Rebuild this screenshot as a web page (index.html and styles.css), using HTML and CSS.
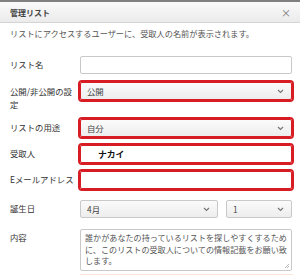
FILE: index.html
```html
<!DOCTYPE html>
<html lang="ja">
<head>
    <meta charset="UTF-8">
    <meta name="viewport" content="width=device-width, initial-scale=1.0">
    <title>管理リスト</title>
    <link rel="stylesheet" href="styles.css">
</head>
<body>
    <div class="dialog">
        <div class="dlg-head">
            <span class="dlg-title">管理リスト</span>
            <span class="dlg-close">×</span>
        </div>
        <p class="dlg-note">リストにアクセスするユーザーに、受取人の名前が表示されます。</p>

        <div class="list-form">
            <label class="f-label">リスト名</label>
            <div class="f-input"></div>

            <label class="f-label two-line">公開/非公開の設定</label>
            <div class="f-select marked">
                <span>公開</span>
                <svg class="chev" width="7" height="5" viewBox="0 0 7 5"><polyline points="1,1 3.5,3.5 6,1" fill="none" stroke="#777" stroke-width="1.2"/></svg>
            </div>

            <label class="f-label">リストの用途</label>
            <div class="f-select marked">
                <span>自分</span>
                <svg class="chev" width="7" height="5" viewBox="0 0 7 5"><polyline points="1,1 3.5,3.5 6,1" fill="none" stroke="#777" stroke-width="1.2"/></svg>
            </div>

            <label class="f-label">受取人</label>
            <div class="f-input marked"><span class="name">ナカイ</span></div>

            <label class="f-label">Eメールアドレス</label>
            <div class="f-input marked"></div>

            <label class="f-label spaced">誕生日</label>
            <div class="date-row spaced">
                <div class="f-select month">
                    <span>4月</span>
                    <svg class="chev" width="7" height="5" viewBox="0 0 7 5"><polyline points="1,1 3.5,3.5 6,1" fill="none" stroke="#777" stroke-width="1.2"/></svg>
                </div>
                <div class="f-select day">
                    <span>1</span>
                    <svg class="chev" width="7" height="5" viewBox="0 0 7 5"><polyline points="1,1 3.5,3.5 6,1" fill="none" stroke="#777" stroke-width="1.2"/></svg>
                </div>
            </div>

            <label class="f-label spaced">内容</label>
            <div class="f-area spaced">誰かがあなたの持っているリストを探しやすくするために、このリストの受取人についての情報記載をお願い致します。<svg class="grip" width="6" height="6" viewBox="0 0 6 6"><path d="M5 1 L1 5 M5 3 L3 5" stroke="#aaa" stroke-width="0.8"/></svg></div>
        </div>

        <div class="dlg-foot"></div>
    </div>
</body>
</html>
```

FILE: styles.css
```css
body {
    margin: 0;
    background: #fff;
    font-family: "Noto Sans CJK JP", "Noto Sans", sans-serif;
    color: #333;
}

.dialog {
    width: 300px;
    height: 275px;
    box-sizing: border-box;
    border-top: 2px solid #808080;
    overflow: hidden;
}

.dlg-head {
    height: 20px;
    display: flex;
    align-items: center;
    justify-content: space-between;
    padding: 0 9px 0 10px;
    background: linear-gradient(#fafafa, #ebebeb);
    border-bottom: 1px solid #d4d4d4;
    font-size: 8px;
}

.dlg-title {
    font-weight: bold;
    color: #444;
}

.dlg-close {
    color: #777;
    font-size: 10px;
}

.dlg-note {
    margin: 4px 10px 0;
    font-size: 8.2px;
    line-height: 12px;
    color: #555;
}

.list-form {
    display: grid;
    grid-template-columns: 70px 1fr;
    row-gap: 8px;
    padding: 17px 8px 0 10px;
    align-items: start;
}

.f-label {
    font-size: 8.4px;
    line-height: 13px;
    padding-top: 2px;
    color: #333;
}

.two-line {
    padding-top: 3px;
    padding-right: 8px;
}

.spaced {
    margin-top: 3px;
}

.f-input,
.f-select {
    height: 18px;
    box-sizing: border-box;
    border: 1px solid #c9c9c9;
    border-radius: 2px;
    background: #fff;
    font-size: 8.4px;
    display: flex;
    align-items: center;
    padding: 0 6px;
}

.f-select {
    justify-content: space-between;
    background: linear-gradient(#fbfbfb, #ededed);
    color: #444;
}

.marked {
    border-color: #d71c23;
    outline: 2px solid #d71c23;
}

.name {
    font-weight: bold;
    color: #111;
    font-size: 8.8px;
    padding-left: 11px;
}

.chev {
    margin-right: 1px;
}

.date-row {
    display: flex;
    gap: 8px;
}

.month {
    width: 138px;
}

.day {
    flex: 1;
}

.f-area {
    height: 42px;
    box-sizing: border-box;
    border: 1px solid #c9c9c9;
    border-radius: 2px;
    padding: 2px 2px 0 4px;
    font-size: 8.1px;
    line-height: 11.5px;
    color: #555;
    overflow: hidden;
    position: relative;
}

.grip {
    position: absolute;
    right: 1px;
    bottom: 1px;
}

.dlg-foot {
    margin: 3px 7px 0 80px;
    height: 6px;
    background: #fde6d8;
}
```
